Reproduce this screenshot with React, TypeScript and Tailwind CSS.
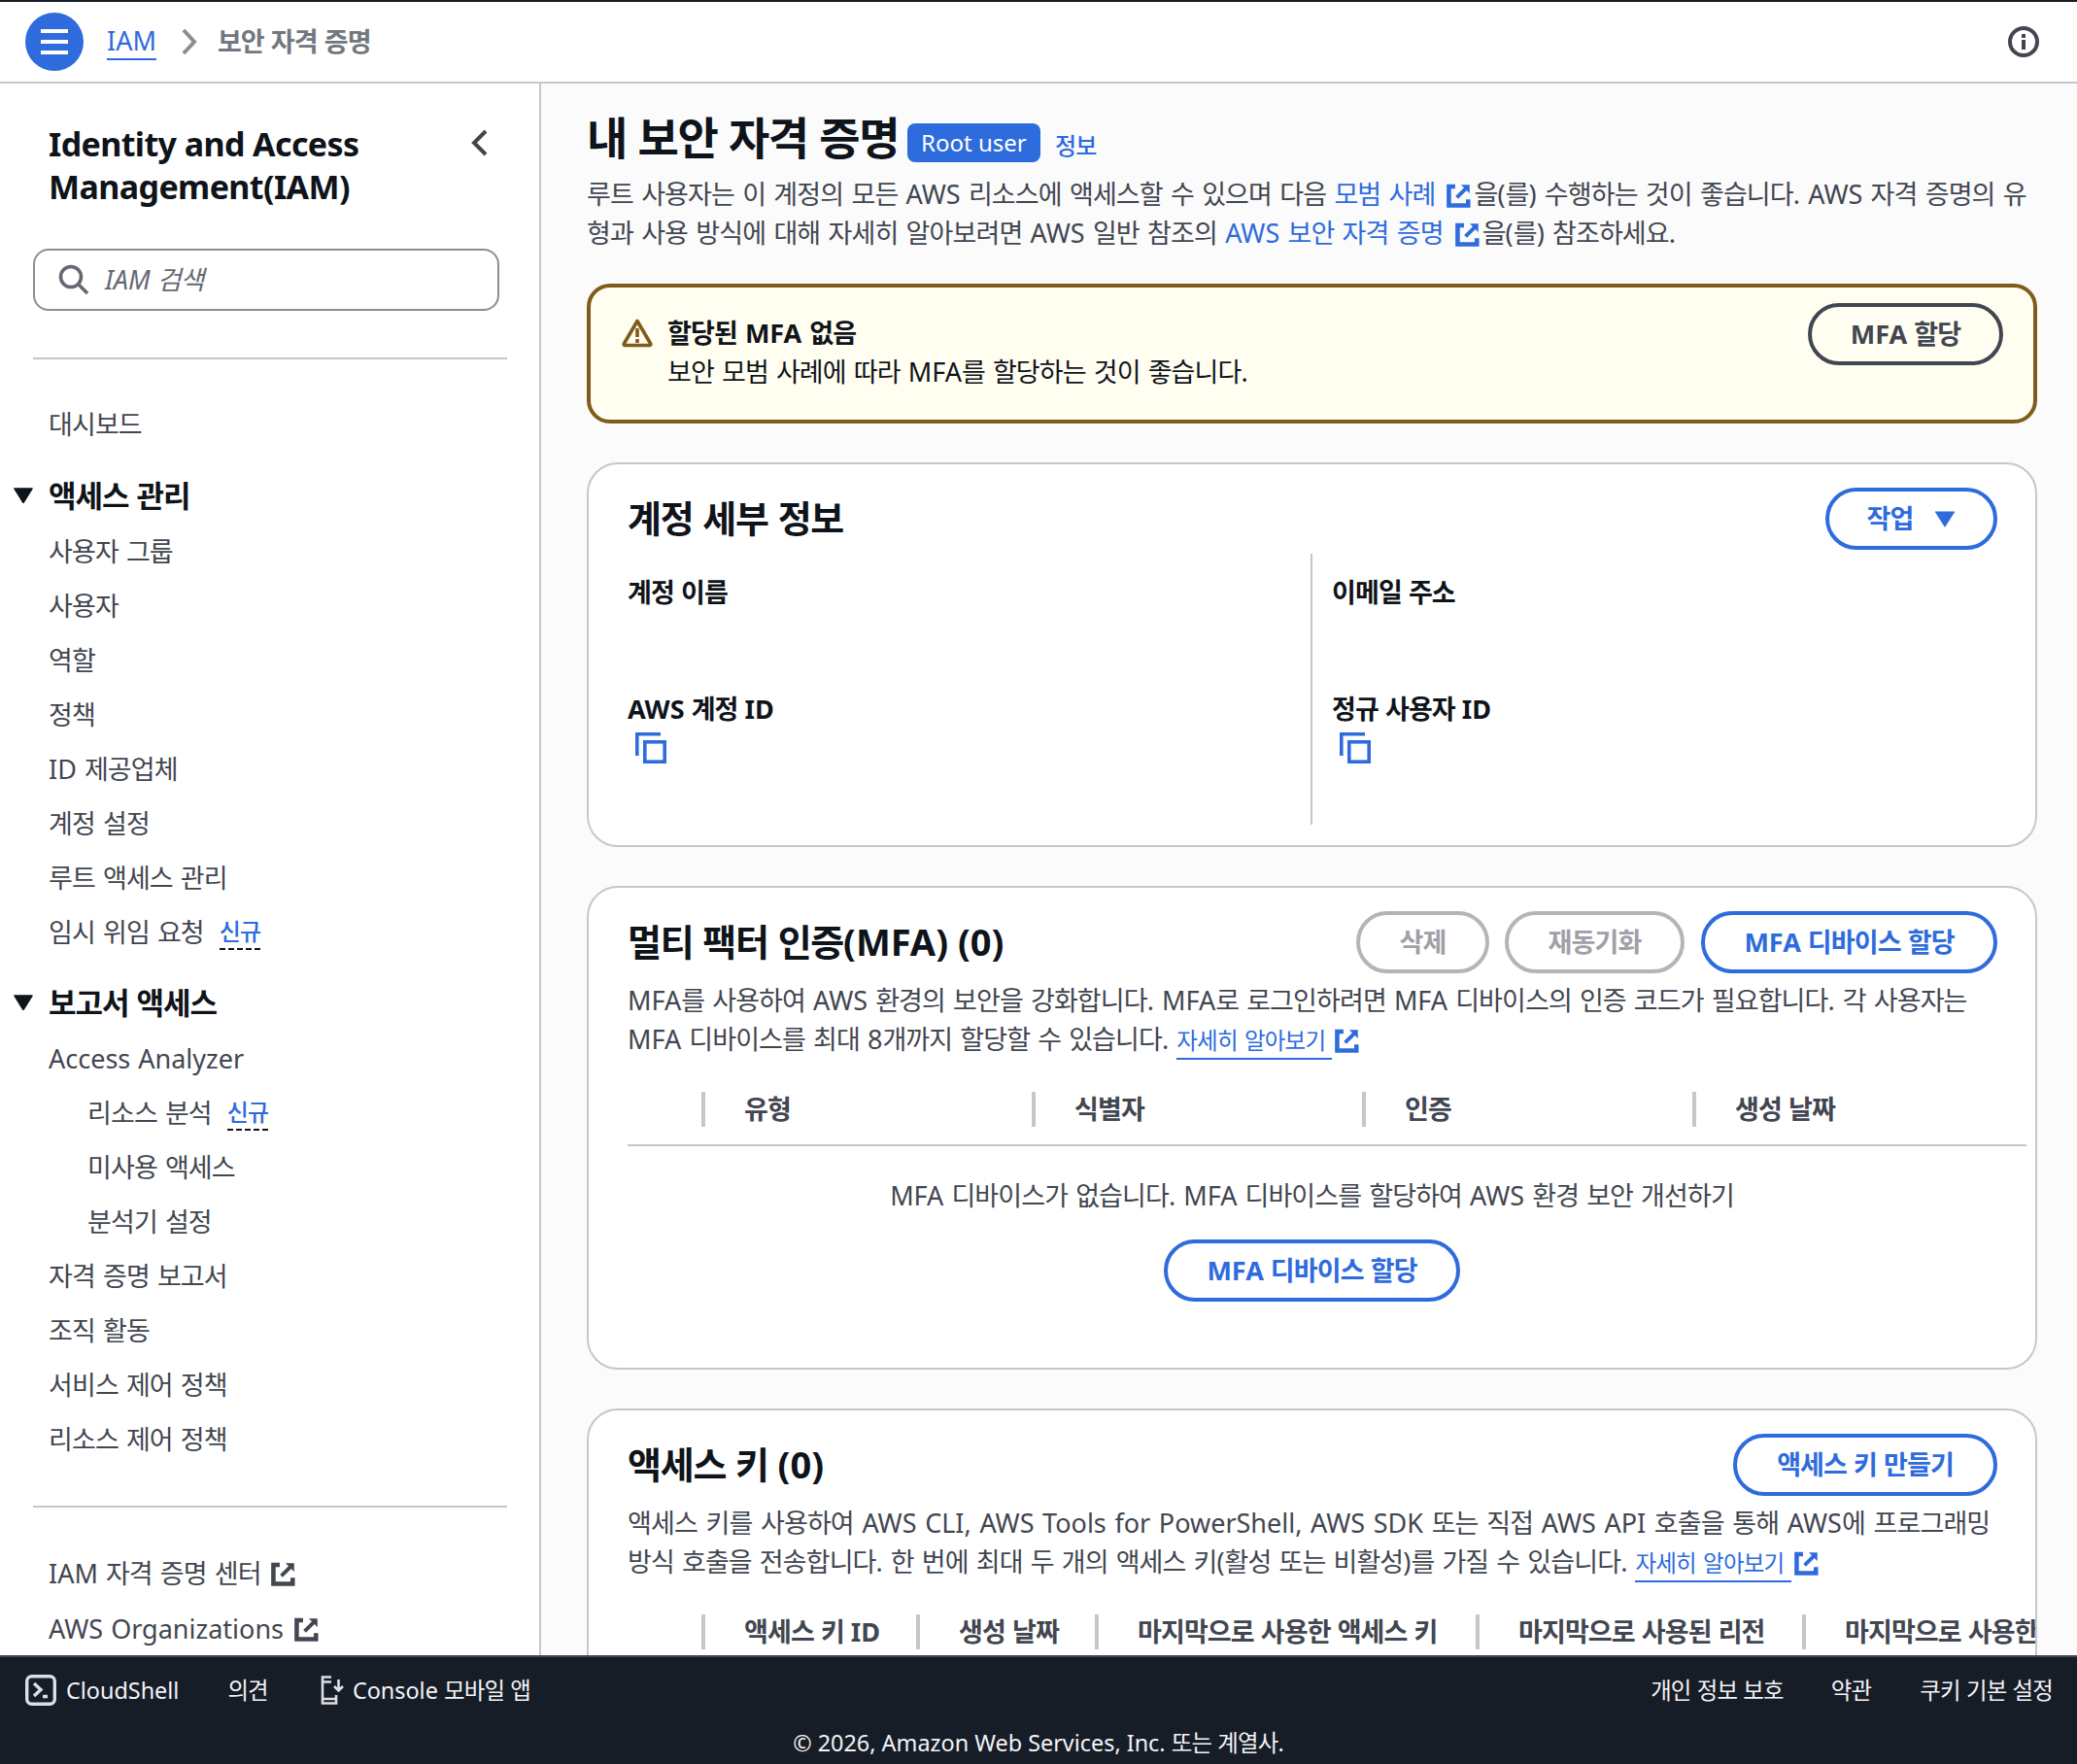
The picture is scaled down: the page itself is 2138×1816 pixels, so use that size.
import React from "react";

const BLUE = "#2e6bdc";

// Hangul runs are set a little tighter than the Latin around them.
function K({ children }: { children: string }) {
  const parts = children.split(/([\uAC00-\uD7A3]+)/);
  return (
    <span>
      {parts.map((p, i) =>
        i % 2 === 1 ? (
          <span key={i} className="tracking-[-0.033em]">
            {p}
          </span>
        ) : (
          <React.Fragment key={i}>{p}</React.Fragment>
        )
      )}
    </span>
  );
}

function External({ color = BLUE, className = "" }: { color?: string; className?: string }) {
  return (
    <svg viewBox="0 0 16 16" className={"inline-block w-[26px] h-[26px] " + className} fill="none" stroke={color} strokeWidth="2.8">
      <path d="M5.5 2.4H1.5v12h12.2v-3.8" />
      <path d="M6.5 9.5L13.5 2.5" strokeWidth="2.4" />
      <path d="M9.2 1.4h5.4v5.4z" fill={color} stroke="none" />
    </svg>
  );
}

function Copy() {
  return (
    <svg viewBox="0 0 32 32" className="w-[32px] h-[32px]" fill="none" stroke={BLUE} strokeWidth="3.6">
      <path d="M1.8 24V1.8H26" />
      <rect x="9.8" y="9.8" width="20.4" height="20.4" />
    </svg>
  );
}

function Triangle() {
  return (
    <svg viewBox="0 0 20 16" className="w-[20px] h-[16px]">
      <path d="M1 1h18L10 15.5z" fill="#0f141a" stroke="#0f141a" strokeLinejoin="round" strokeWidth="1.5" />
    </svg>
  );
}

function New() {
  return (
    <span className="ml-[16px] text-[24px] leading-[34px] text-[#2e6bdc] border-b-2 border-dashed border-[#0f141a] font-medium">
      <K>신규</K>
    </span>
  );
}

function Item({ children, sub, after }: { children: string; sub?: boolean; after?: React.ReactNode }) {
  return (
    <div className={"h-[56px] flex items-center text-[27px] text-[#424650] whitespace-pre [word-spacing:1px] " + (sub ? "pl-[90px]" : "pl-[50px]")}>
      <K>{children}</K>
      {after}
    </div>
  );
}

function Section({ children }: { children: string }) {
  return (
    <div className="h-[56px] flex items-center pl-[14px] gap-[16px] text-[31px] font-bold text-[#0f141a]">
      <Triangle />
      <K>{children}</K>
    </div>
  );
}

function Btn({ children, tone, className = "" }: { children: React.ReactNode; tone: "blue" | "gray" | "off"; className?: string }) {
  const t =
    tone === "blue"
      ? "border-[#2e6bdc] text-[#2e6bdc]"
      : tone === "gray"
      ? "border-[#424650] text-[#424650]"
      : "border-[#b4b4bb] text-[#a0a0a8]";
  return (
    <div className={"h-[64px] shrink-0 rounded-full border-[4px] flex items-center justify-center text-[27px] font-bold whitespace-nowrap " + t + " " + className}>
      {children}
    </div>
  );
}

function Head({ cols }: { cols: { w: number; t: string }[] }) {
  return (
    <div className="flex h-[36px] text-[27px] font-bold text-[#424650] whitespace-nowrap pl-[76px]">
      {cols.map((c) => (
        <div key={c.t} className="shrink-0 border-l-[4px] border-[#c6c6cd] pl-[40px] flex items-center" style={{ width: c.w }}>
          <K>{c.t}</K>
        </div>
      ))}
    </div>
  );
}

export default function App() {
  return (
    <div className="w-[2138px] h-[1816px] flex flex-col overflow-hidden bg-white font-['Noto_Sans','Noto_Sans_CJK_KR',sans-serif] text-[27px] leading-[40px] text-[#0f141a]">
      <header className="h-[86px] shrink-0 border-t-2 border-b-2 border-t-[#161d26] border-b-[#c6c6cd] flex items-center pl-[26px] pr-[39px]">
        <div className="w-[60px] h-[60px] rounded-full bg-[#2e6bdc] flex flex-col items-center justify-center gap-[7px]">
          <span className="w-[28px] h-[4px] bg-white" />
          <span className="w-[28px] h-[4px] bg-white" />
          <span className="w-[28px] h-[4px] bg-white" />
        </div>
        <span className="ml-[24px] text-[#2e6bdc] border-b-2 border-[#2e6bdc] leading-[36px]">IAM</span>
        <svg viewBox="0 0 16 28" className="ml-[26px] w-[16px] h-[28px]" fill="none" stroke="#8c8c94" strokeWidth="4">
          <path d="M2 2l11 12L2 26" />
        </svg>
        <span className="ml-[21px] font-bold text-[#727780]">
          <K>보안 자격 증명</K>
        </span>
        <svg viewBox="0 0 32 32" className="ml-auto w-[32px] h-[32px]" fill="none" stroke="#424650" strokeWidth="4">
          <circle cx="16" cy="16" r="14" />
          <path d="M16 14v10M16 8v4" />
        </svg>
      </header>

      <div className="flex-1 min-h-0 flex">
        <aside className="w-[557px] shrink-0 border-r-2 border-[#c6c6cd] bg-white overflow-hidden pt-[40px]">
          <div className="flex pl-[50px] pr-[52px]">
            <div className="text-[34px] leading-[44px] font-bold flex-1 tracking-[-0.6px]">
              Identity and Access
              <br />
              Management(IAM)
            </div>
            <svg viewBox="0 0 18 28" className="mt-[7px] w-[18px] h-[28px]" fill="none" stroke="#424650" strokeWidth="4">
              <path d="M15 2L3 14l12 12" />
            </svg>
          </div>
          <div className="mt-[42px] ml-[34px] w-[480px] h-[64px] rounded-[16px] border-2 border-[#8c8c94] flex items-center pl-[24px]">
            <svg viewBox="0 0 32 32" className="w-[32px] h-[32px]" fill="none" stroke="#656871" strokeWidth="3.6">
              <circle cx="13" cy="13" r="10.5" />
              <path d="M20.5 20.5L30 30" />
            </svg>
            <span className="ml-[16px] italic text-[#656871]">
              <K>IAM 검색</K>
            </span>
          </div>
          <div className="mt-[48px] ml-[34px] w-[488px] h-[2px] bg-[#c6c6cd]" />
          <div className="mt-[39px]">
            <Item>대시보드</Item>
          </div>
          <div className="mt-[17px]">
            <Section>액세스 관리</Section>
          </div>
          <div className="mt-[2px]">
            <Item>사용자 그룹</Item>
            <Item>사용자</Item>
            <Item>역할</Item>
            <Item>정책</Item>
            <Item>ID 제공업체</Item>
            <Item>계정 설정</Item>
            <Item>루트 액세스 관리</Item>
            <Item after={<New />}>임시 위임 요청</Item>
          </div>
          <div className="mt-[16px]">
            <Section>보고서 액세스</Section>
          </div>
          <div className="mt-[2px]">
            <Item>Access Analyzer</Item>
            <Item sub after={<New />}>
              리소스 분석
            </Item>
            <Item sub>미사용 액세스</Item>
            <Item sub>분석기 설정</Item>
            <Item>자격 증명 보고서</Item>
            <Item>조직 활동</Item>
            <Item>서비스 제어 정책</Item>
            <Item>리소스 제어 정책</Item>
          </div>
          <div className="mt-[40px] ml-[34px] w-[488px] h-[2px] bg-[#c6c6cd]" />
          <div className="mt-[40px]">
            <Item after={<External color="#424650" className="ml-[10px]" />}>IAM 자격 증명 센터</Item>
          </div>
          <div className="mt-[1px]">
            <Item after={<External color="#424650" className="ml-[11px]" />}>AWS Organizations</Item>
          </div>
        </aside>

        <main className="flex-1 min-w-0 bg-[#fbfbfc] overflow-hidden pl-[47px] pr-[41px] pt-[25px]">
          <div className="h-[60px] flex items-center whitespace-nowrap">
            <h1 className="text-[46px] leading-[60px] font-bold tracking-[-0.2px]">
              <K>내 보안 자격 증명</K>
            </h1>
            <span className="ml-[9px] mt-[12px] h-[40px] w-[137px] rounded-[8px] bg-[#2e6bdc] text-white text-[24px] leading-[40px] text-center">Root user</span>
            <span className="ml-[15px] mt-[17px] text-[24px] text-[#2e6bdc] font-medium">
              <K>정보</K>
            </span>
          </div>
          <p className="mt-[9px] h-[80px] text-[#424650] whitespace-nowrap [word-spacing:1.2px]">
            <K>루트 사용자는 이 계정의 모든 AWS 리소스에 액세스할 수 있으며 다음 </K>
            <span className="text-[#2e6bdc]">
              <K>모범 사례</K>
            </span>
            <External className="ml-[12px] mr-[2px] align-[-4px]" />
            <K>을(를) 수행하는 것이 좋습니다. AWS 자격 증명의 유</K>
            <br />
            <K>형과 사용 방식에 대해 자세히 알아보려면 AWS 일반 참조의 </K>
            <span className="text-[#2e6bdc]">
              <K>AWS 보안 자격 증명</K>
            </span>
            <External className="ml-[12px] mr-[2px] align-[-4px]" />
            <K>을(를) 참조하세요.</K>
          </p>

          <section className="mt-[32px] h-[144px] rounded-[24px] border-[4px] border-[#805b1c] bg-[#fffef0] flex pl-[32px] pr-[31px]">
            <svg viewBox="0 0 32 32" className="mt-[31px] w-[32px] h-[32px] shrink-0" fill="none" stroke="#805b1c" strokeWidth="3.6">
              <path d="M16 3.5L2.5 26.5a1.2 1.2 0 0 0 1 2h25a1.2 1.2 0 0 0 1-2z" strokeLinejoin="round" />
              <path d="M16 11v9M16 22v4" />
            </svg>
            <div className="ml-[15px] mt-[27px] [word-spacing:1px]">
              <div className="font-bold">
                <K>할당된 MFA 없음</K>
              </div>
              <div>
                <K>보안 모범 사례에 따라 MFA를 할당하는 것이 좋습니다.</K>
              </div>
            </div>
            <Btn tone="gray" className="ml-auto mt-[16px] w-[201px]">
              <K>MFA 할당</K>
            </Btn>
          </section>

          <section className="mt-[40px] h-[396px] rounded-[32px] border-2 border-[#c6c6cd] bg-white pl-[40px] pr-[39px] pt-[24px]">
            <div className="flex items-center h-[64px]">
              <h2 className="text-[38px] font-bold pb-[2px]">
                <K>계정 세부 정보</K>
              </h2>
              <Btn tone="blue" className="ml-auto w-[177px] gap-[22px]">
                <K>작업</K>
                <svg viewBox="0 0 20 16" className="w-[22px] h-[17px]">
                  <path d="M1 1h18L10 15z" fill="#2e6bdc" stroke="#2e6bdc" strokeLinejoin="round" />
                </svg>
              </Btn>
            </div>
            <div className="mt-[4px] h-[279px] grid grid-cols-2">
              <div className="pt-[20px] border-r-2 border-[#c6c6cd]">
                <div className="font-bold">
                  <K>계정 이름</K>
                </div>
                <div className="mt-[80px] font-bold">
                  <K>AWS 계정 ID</K>
                </div>
                <div className="mt-[4px] ml-[8px]">
                  <Copy />
                </div>
              </div>
              <div className="pt-[20px] pl-[20px]">
                <div className="font-bold">
                  <K>이메일 주소</K>
                </div>
                <div className="mt-[80px] font-bold">
                  <K>정규 사용자 ID</K>
                </div>
                <div className="mt-[4px] ml-[8px]">
                  <Copy />
                </div>
              </div>
            </div>
          </section>

          <section className="mt-[40px] h-[498px] rounded-[32px] border-2 border-[#c6c6cd] bg-white pl-[40px] pt-[24px]">
            <div className="flex items-center h-[64px] pr-[39px]">
              <h2 className="text-[38px] font-bold flex-1 pb-[2px]">
                <K>멀티 팩터 인증(MFA) (0)</K>
              </h2>
              <Btn tone="off" className="w-[137px]">
                <K>삭제</K>
              </Btn>
              <Btn tone="off" className="ml-[16px] w-[185px]">
                <K>재동기화</K>
              </Btn>
              <Btn tone="blue" className="ml-[17px] w-[305px]">
                <K>MFA 디바이스 할당</K>
              </Btn>
            </div>
            <p className="mt-[8px] h-[80px] text-[#424650] whitespace-nowrap [word-spacing:1px]">
              <K>MFA를 사용하여 AWS 환경의 보안을 강화합니다. MFA로 로그인하려면 MFA 디바이스의 인증 코드가 필요합니다. 각 사용자는</K>
              <br />
              <K>MFA 디바이스를 최대 8개까지 할당할 수 있습니다. </K>
              <span className="text-[23.5px] text-[#2e6bdc] border-b-2 border-[#2e6bdc] pb-[2px]">
                <K>자세히 알아보기 </K>
              </span>
              <External className="ml-[3px] align-[-4px]" />
            </p>
            <div className="mt-[34px] w-[1440px]">
              <Head
                cols={[
                  { w: 340, t: "유형" },
                  { w: 340, t: "식별자" },
                  { w: 340, t: "인증" },
                  { w: 340, t: "생성 날짜" },
                ]}
              />
              <div className="mt-[18px] h-[2px] bg-[#c6c6cd]" />
            </div>
            <div className="pr-[40px] flex flex-col items-center">
              <div className="mt-[31px] text-[#424650] [word-spacing:1px]">
                <K>MFA 디바이스가 없습니다. MFA 디바이스를 할당하여 AWS 환경 보안 개선하기</K>
              </div>
              <Btn tone="blue" className="mt-[25px] w-[305px]">
                <K>MFA 디바이스 할당</K>
              </Btn>
            </div>
          </section>

          <section className="mt-[40px] h-[400px] rounded-[32px] border-2 border-[#c6c6cd] bg-white overflow-hidden pl-[40px] pt-[24px]">
            <div className="flex items-center h-[64px] pr-[39px]">
              <h2 className="text-[38px] font-bold flex-1 pb-[2px]">
                <K>액세스 키 (0)</K>
              </h2>
              <Btn tone="blue" className="w-[272px]">
                <K>액세스 키 만들기</K>
              </Btn>
            </div>
            <p className="mt-[8px] h-[80px] text-[#424650] whitespace-nowrap [word-spacing:1px]">
              <span className="[word-spacing:1.6px]">
                <K>액세스 키를 사용하여 AWS CLI, AWS Tools for PowerShell, AWS SDK 또는 직접 AWS API 호출을 통해 AWS에 프로그래밍</K>
              </span>
              <br />
              <K>방식 호출을 전송합니다. 한 번에 최대 두 개의 액세스 키(활성 또는 비활성)를 가질 수 있습니다. </K>
              <span className="text-[23.5px] text-[#2e6bdc] border-b-2 border-[#2e6bdc] pb-[2px]">
                <K>자세히 알아보기 </K>
              </span>
              <External className="ml-[3px] align-[-4px]" />
            </p>
            <div className="mt-[34px]">
              <Head
                cols={[
                  { w: 221, t: "액세스 키 ID" },
                  { w: 184, t: "생성 날짜" },
                  { w: 392, t: "마지막으로 사용한 액세스 키" },
                  { w: 336, t: "마지막으로 사용된 리전" },
                  { w: 400, t: "마지막으로 사용한 서비스" },
                ]}
              />
            </div>
          </section>
        </main>
      </div>

      <footer className="h-[112px] shrink-0 border-t-2 border-[#414750] bg-[#161d26] text-[#f3f3f7] text-[23.4px]">
        <div className="h-[68px] flex items-center pl-[26px] pr-[25px] whitespace-nowrap">
          <svg viewBox="0 0 32 32" className="w-[32px] h-[32px]" fill="none" stroke="#dedee3" strokeWidth="3.4">
            <rect x="1.7" y="1.7" width="28.6" height="28.6" rx="5" />
            <path d="M9 9l7 6.5L9 22M18 22.5h5" />
          </svg>
          <span className="ml-[10px]">CloudShell</span>
          <span className="ml-[50px]">
            <K>의견</K>
          </span>
          <svg viewBox="0 0 24 30" className="ml-[54px] w-[24px] h-[30px]" fill="none" stroke="#dedee3" strokeWidth="2.6">
            <path d="M11 1.5H2v27h14V20M2 6.5h9M2 24h14" />
            <path d="M18.5 4v11M14 11l4.5 4.5L23 11" />
          </svg>
          <span className="ml-[9px]">
            <K>Console 모바일 앱</K>
          </span>
          <span className="ml-auto">
            <K>개인 정보 보호</K>
          </span>
          <span className="ml-[49px]">
            <K>약관</K>
          </span>
          <span className="ml-[50px]">
            <K>쿠키 기본 설정</K>
          </span>
        </div>
        <div className="text-center leading-[40px]">
          <K>© 2026, Amazon Web Services, Inc. 또는 계열사.</K>
        </div>
      </footer>
    </div>
  );
}
